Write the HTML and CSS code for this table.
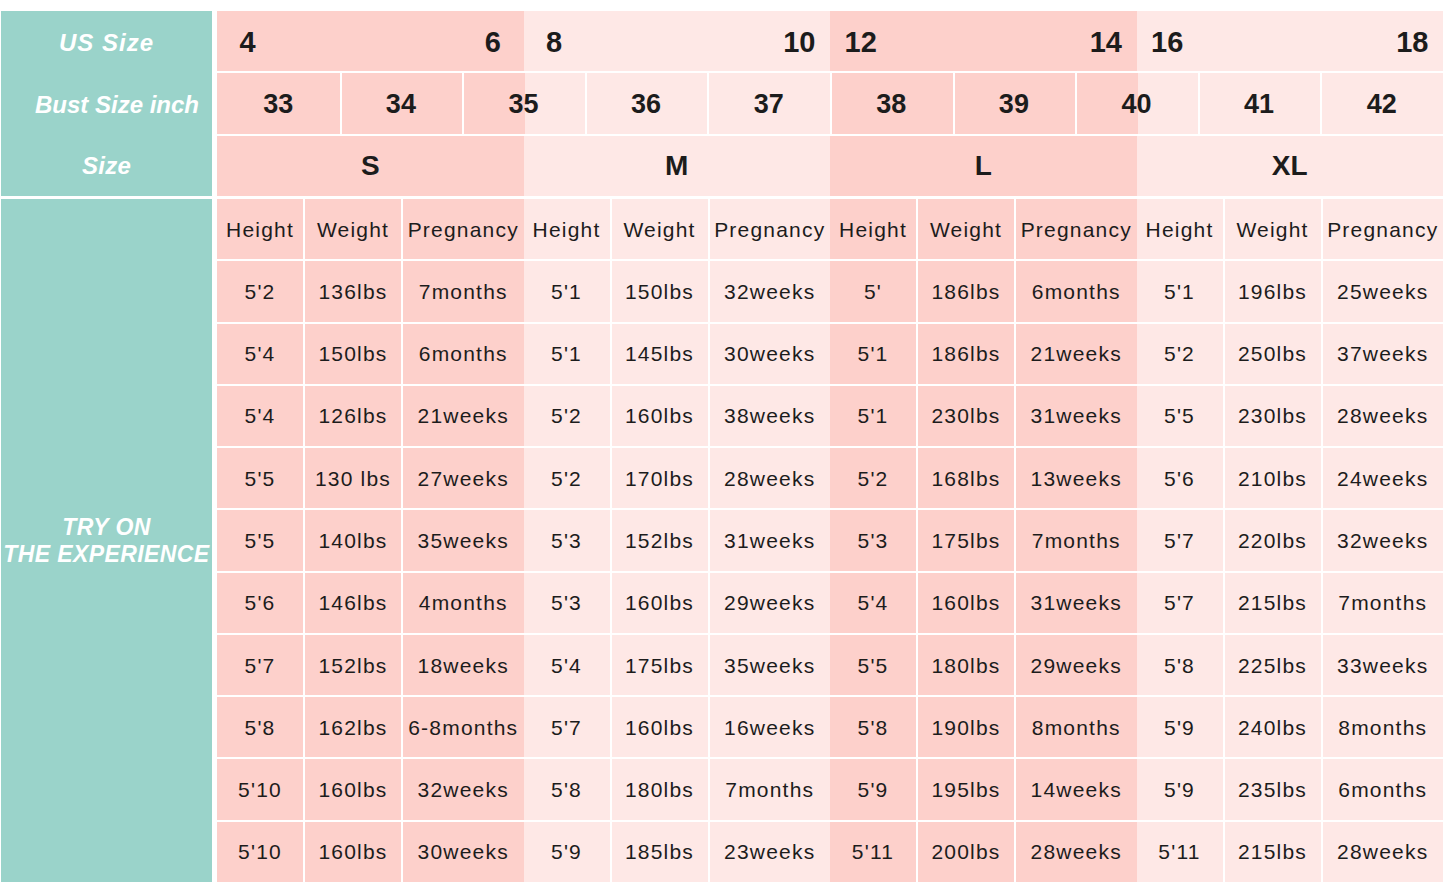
FILE: index.html
```html
<!DOCTYPE html>
<html lang="en">
<head>
<meta charset="utf-8">
<title>Size Chart</title>
<link rel="stylesheet" href="styles.css">
</head>
<body>
<div class="chart">
  <div class="head">
    <div class="labels head-labels">
      <div class="label us-label">US Size</div>
      <div class="label bust">Bust Size inch</div>
      <div class="label">Size</div>
    </div>
    <div class="head-grid">
      <div class="row">
        <div class="grp dark us"><span class="num">4</span><span class="num end">6</span></div>
        <div class="grp light us"><span class="num">8</span><span class="num end">10</span></div>
        <div class="grp dark us"><span class="num">12</span><span class="num end">14</span></div>
        <div class="grp light us"><span class="num">16</span><span class="num end">18</span></div>
      </div>
      <div class="row">
        <div class="bc dark first">33</div>
        <div class="bc dark">34</div>
        <div class="bc split">35</div>
        <div class="bc light">36</div>
        <div class="bc light">37</div>
        <div class="bc dark">38</div>
        <div class="bc dark">39</div>
        <div class="bc split">40</div>
        <div class="bc light">41</div>
        <div class="bc light">42</div>
      </div>
      <div class="row">
        <div class="grp dark sz">S</div>
        <div class="grp light sz">M</div>
        <div class="grp dark sz">L</div>
        <div class="grp light sz">XL</div>
      </div>
    </div>
  </div>
  <div class="body">
    <div class="labels try"><div>TRY ON<br>THE EXPERIENCE</div></div>
    <div class="data" id="data"></div>
  </div>
</div>
<script src="script.js"></script>
</body>
</html>
```

FILE: styles.css
```css
* { box-sizing: border-box; }
html, body { margin: 0; padding: 0; background: #ffffff; }
body {
  font-family: "Liberation Sans", Arial, sans-serif;
  color: #1c1c1c;
  width: 1445px;
  height: 894px;
  overflow: hidden;
}
.chart {
  display: flex;
  flex-direction: column;
  gap: 3px;
  padding: 11px 2px 0 1px;
}
.head, .body {
  display: flex;
  gap: 5px;
}
.head { height: 185px; }
.body { height: 683px; }
.labels {
  flex: none;
  width: 211px;
  background: #9ad3ca;
  color: #ffffff;
  font-weight: bold;
  font-style: italic;
}
.head-labels {
  display: flex;
  flex-direction: column;
}
.label {
  flex: 1;
  display: flex;
  align-items: center;
  justify-content: center;
  font-size: 24px;
  letter-spacing: 0.3px;
  padding-top: 2px;
}
.label.us-label { letter-spacing: 1px; }
.label.bust { padding-left: 21px; letter-spacing: 0; }
.try {
  display: flex;
  align-items: center;
  justify-content: center;
  text-align: center;
  font-size: 23px;
  line-height: 27px;
  letter-spacing: 0.4px;
  padding-top: 1px;
}
.head-grid {
  width: 1226px;
  display: flex;
  flex-direction: column;
  gap: 2px;
}
.row {
  flex: 1;
  display: grid;
  grid-template-columns: repeat(20, 1fr);
  font-weight: bold;
}
.dark { background: #fdd0cb; }
.light { background: #fee8e6; }
.split { background: linear-gradient(to right, #fdd0cb 50%, #fee8e6 50%); }
.grp { grid-column: span 5; }
.us {
  display: grid;
  grid-template-columns: repeat(5, 1fr);
  align-items: center;
  font-size: 29px;
  padding-top: 2px;
}
.num { grid-column: 1; text-align: center; }
.num.end { grid-column: 5; }
.bc {
  grid-column: span 2;
  display: flex;
  align-items: center;
  justify-content: center;
  font-size: 27px;
  border-left: 2px solid #ffffff;
  padding-right: 2px;
  padding-top: 2px;
}
.bc.first { border-left: 0; padding-right: 0; }
.sz {
  display: flex;
  align-items: center;
  justify-content: center;
  font-size: 28px;
  padding-top: 1px;
}
.data {
  width: 1226px;
  display: grid;
  grid-template-columns: repeat(4, 88fr 98fr 120.5fr);
  grid-template-rows: repeat(11, 1fr);
  row-gap: 2px;
}
.cell {
  display: flex;
  align-items: center;
  justify-content: center;
  font-size: 21px;
  letter-spacing: 1.2px;
  white-space: nowrap;
  padding-top: 1px;
}
.cell.sep { border-right: 2px solid #ffffff; }
```

FILE: script.js
```js
const groups = [
  { cls: "dark", rows: [
    ["5'2","136lbs","7months"],["5'4","150lbs","6months"],["5'4","126lbs","21weeks"],
    ["5'5","130 lbs","27weeks"],["5'5","140lbs","35weeks"],["5'6","146lbs","4months"],
    ["5'7","152lbs","18weeks"],["5'8","162lbs","6-8months"],["5'10","160lbs","32weeks"],
    ["5'10","160lbs","30weeks"]]},
  { cls: "light", rows: [
    ["5'1","150lbs","32weeks"],["5'1","145lbs","30weeks"],["5'2","160lbs","38weeks"],
    ["5'2","170lbs","28weeks"],["5'3","152lbs","31weeks"],["5'3","160lbs","29weeks"],
    ["5'4","175lbs","35weeks"],["5'7","160lbs","16weeks"],["5'8","180lbs","7months"],
    ["5'9","185lbs","23weeks"]]},
  { cls: "dark", rows: [
    ["5'","186lbs","6months"],["5'1","186lbs","21weeks"],["5'1","230lbs","31weeks"],
    ["5'2","168lbs","13weeks"],["5'3","175lbs","7months"],["5'4","160lbs","31weeks"],
    ["5'5","180lbs","29weeks"],["5'8","190lbs","8months"],["5'9","195lbs","14weeks"],
    ["5'11","200lbs","28weeks"]]},
  { cls: "light", rows: [
    ["5'1","196lbs","25weeks"],["5'2","250lbs","37weeks"],["5'5","230lbs","28weeks"],
    ["5'6","210lbs","24weeks"],["5'7","220lbs","32weeks"],["5'7","215lbs","7months"],
    ["5'8","225lbs","33weeks"],["5'9","240lbs","8months"],["5'9","235lbs","6months"],
    ["5'11","215lbs","28weeks"]]}
];
const data = document.getElementById("data");
for (let r = 0; r < 11; r++) {
  groups.forEach(g => {
    const vals = r === 0 ? ["Height","Weight","Pregnancy"] : g.rows[r - 1];
    vals.forEach((v, i) => {
      const d = document.createElement("div");
      d.className = "cell " + g.cls + (i < 2 ? " sep" : "");
      d.textContent = v;
      data.appendChild(d);
    });
  });
}
```
